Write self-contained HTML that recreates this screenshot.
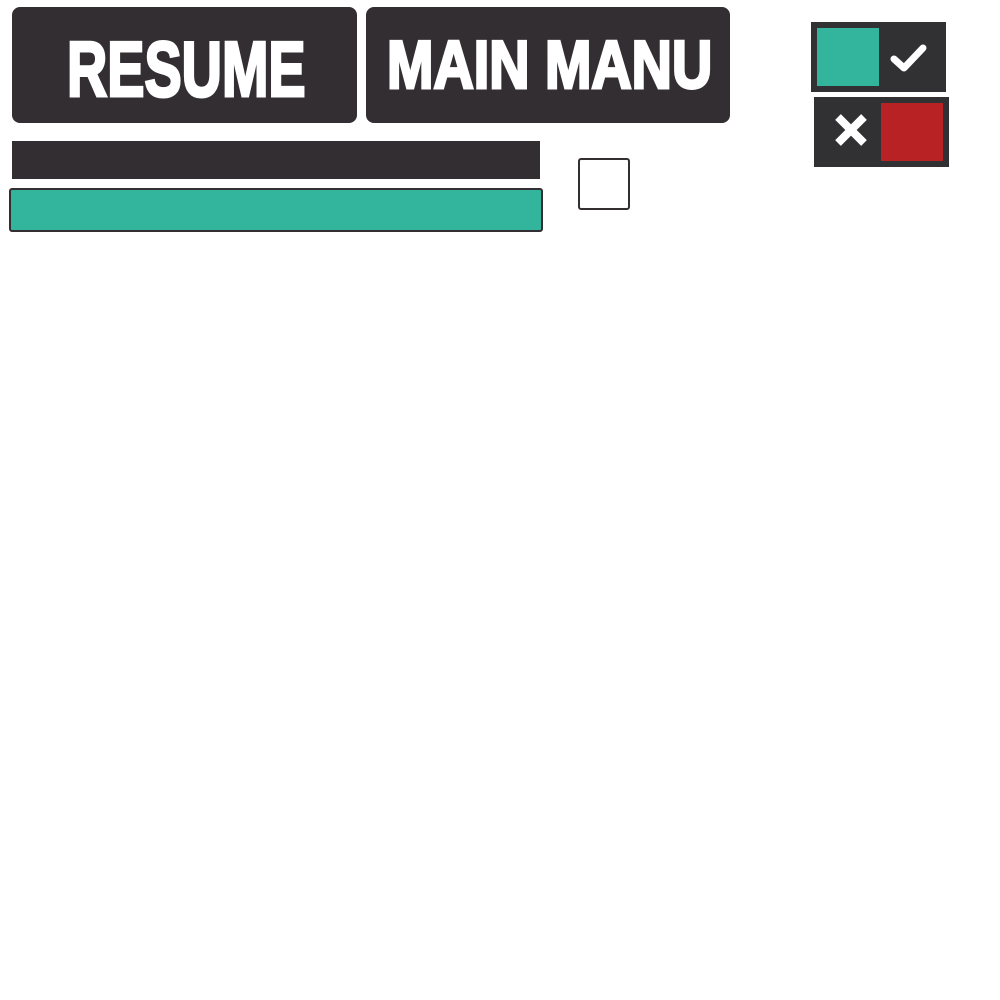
<!DOCTYPE html>
<html><head><style>
body{margin:0;width:1000px;height:1000px;background:#fff;position:relative;overflow:hidden;font-family:"Liberation Sans",sans-serif}
.a{position:absolute;box-sizing:border-box}
.btn{background:#332e32;border-radius:8px}
.t{position:absolute;color:#fff;font-weight:bold;white-space:nowrap;transform-origin:0 0;line-height:1;-webkit-text-stroke:3px #fff}
</style></head><body>
<div class="a btn" style="left:12px;top:7px;width:345px;height:116px"></div>
<div class="a btn" style="left:366px;top:7px;width:364px;height:116px"></div>
<div class="t" style="left:67px;top:30px;font-size:78px;transform:scaleX(0.715)">RESUME</div>
<div class="t" style="left:387px;top:31px;font-size:68px;transform:scaleX(0.82)">MAIN MANU</div>
<div class="a" style="left:12px;top:141px;width:528px;height:38px;background:#332e32"></div>
<div class="a" style="left:9px;top:188px;width:534px;height:44px;background:#32b59c;border:2px solid #332e32;border-radius:3px"></div>
<div class="a" style="left:578px;top:158px;width:52px;height:52px;border:2px solid #332e32;border-radius:3px"></div>
<div class="a" style="left:811px;top:22px;width:135px;height:70px;background:#313133"></div>
<div class="a" style="left:817px;top:28px;width:62px;height:58px;background:#32b59c"></div>
<svg class="a" style="left:885px;top:35px" width="48" height="45" viewBox="0 0 48 45"><path d="M9 24 L19 33 L38 13" stroke="#fff" stroke-width="7" fill="none" stroke-linecap="round" stroke-linejoin="round"/></svg>
<div class="a" style="left:814px;top:97px;width:135px;height:70px;background:#313133"></div>
<div class="a" style="left:881px;top:103px;width:62px;height:58px;background:#b82224"></div>
<svg class="a" style="left:834px;top:114px" width="34" height="32" viewBox="0 0 34 32"><path d="M4 3 L30 29 M30 3 L4 29" stroke="#fff" stroke-width="8" fill="none"/></svg>
</body></html>
